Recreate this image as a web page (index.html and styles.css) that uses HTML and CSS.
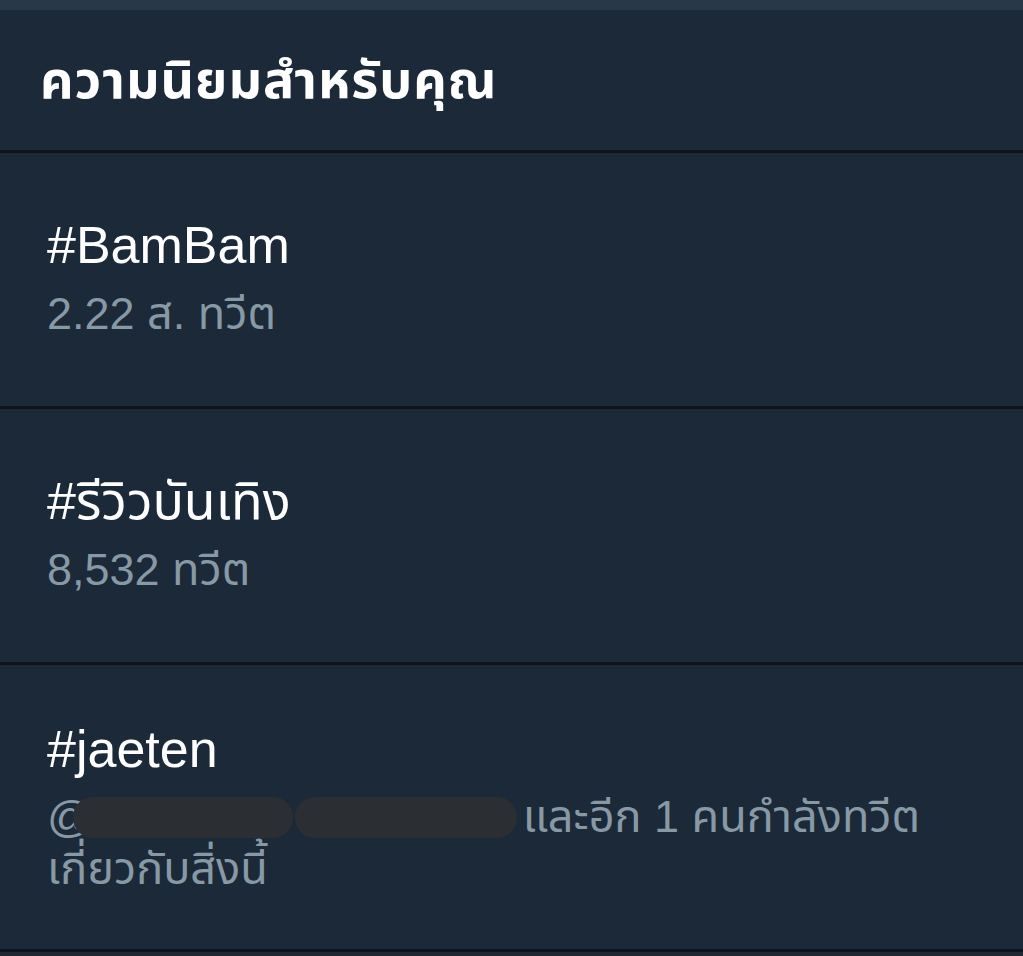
FILE: index.html
```html
<!DOCTYPE html>
<html lang="th">
<head>
    <meta charset="UTF-8">
    <meta name="viewport" content="width=device-width, initial-scale=1.0">
    <title>ความนิยมสำหรับคุณ</title>
    <link rel="stylesheet" href="styles.css">
</head>
<body>
    <div class="topbar"></div>
    <div class="panel-header">
        <h2>ความนิยมสำหรับคุณ</h2>
    </div>
    <div class="trend">
        <div class="trend-name">#BamBam</div>
        <div class="trend-meta">2.22 ส. ทวีต</div>
    </div>
    <div class="trend">
        <div class="trend-name">#รีวิวบันเทิง</div>
        <div class="trend-meta">8,532 ทวีต</div>
    </div>
    <div class="trend trend-last">
        <div class="trend-name">#jaeten</div>
        <div class="trend-meta trend-context">@<span class="hidden-name name-a"></span><span class="hidden-name name-b"></span>และอีก 1 คนกำลังทวีต<br>เกี่ยวกับสิ่งนี้</div>
    </div>
</body>
</html>
```

FILE: styles.css
```css
body {
    margin: 0;
    background-color: #1c2938;
    font-family: "Liberation Sans", "Noto Sans Thai", "Noto Sans", sans-serif;
    color: #fff;
    height: 956px;
    overflow: hidden;
}
.topbar {
    height: 10px;
    background-color: #283848;
}
.panel-header {
    height: 140px;
    border-bottom: 3px solid #0e141b;
    padding: 0 40px;
    display: flex;
    align-items: center;
}
.panel-header h2 {
    margin: 0;
    font-size: 52px;
    font-weight: bold;
    letter-spacing: 1px;
    padding-top: 4px;
}
.trend {
    height: 256px;
    box-sizing: border-box;
    padding: 62px 47px 0;
    border-bottom: 3px solid #0e141b;
}
.trend-last {
    height: 287px;
    padding-top: 54px;
}
.trend-name {
    font-size: 52px;
    line-height: 60px;
}
.trend-meta {
    margin-top: 13px;
    font-size: 45px;
    line-height: 52px;
    color: #8899a6;
}
.trend-context {
    margin-top: 12px;
}
.hidden-name {
    display: inline-block;
    height: 41px;
    vertical-align: -6px;
    background-color: #2b2e33;
    border-radius: 20px;
}
.name-a {
    width: 220px;
    margin-left: -20px;
}
.name-b {
    width: 222px;
    margin-left: 2px;
    margin-right: 6px;
}
```
